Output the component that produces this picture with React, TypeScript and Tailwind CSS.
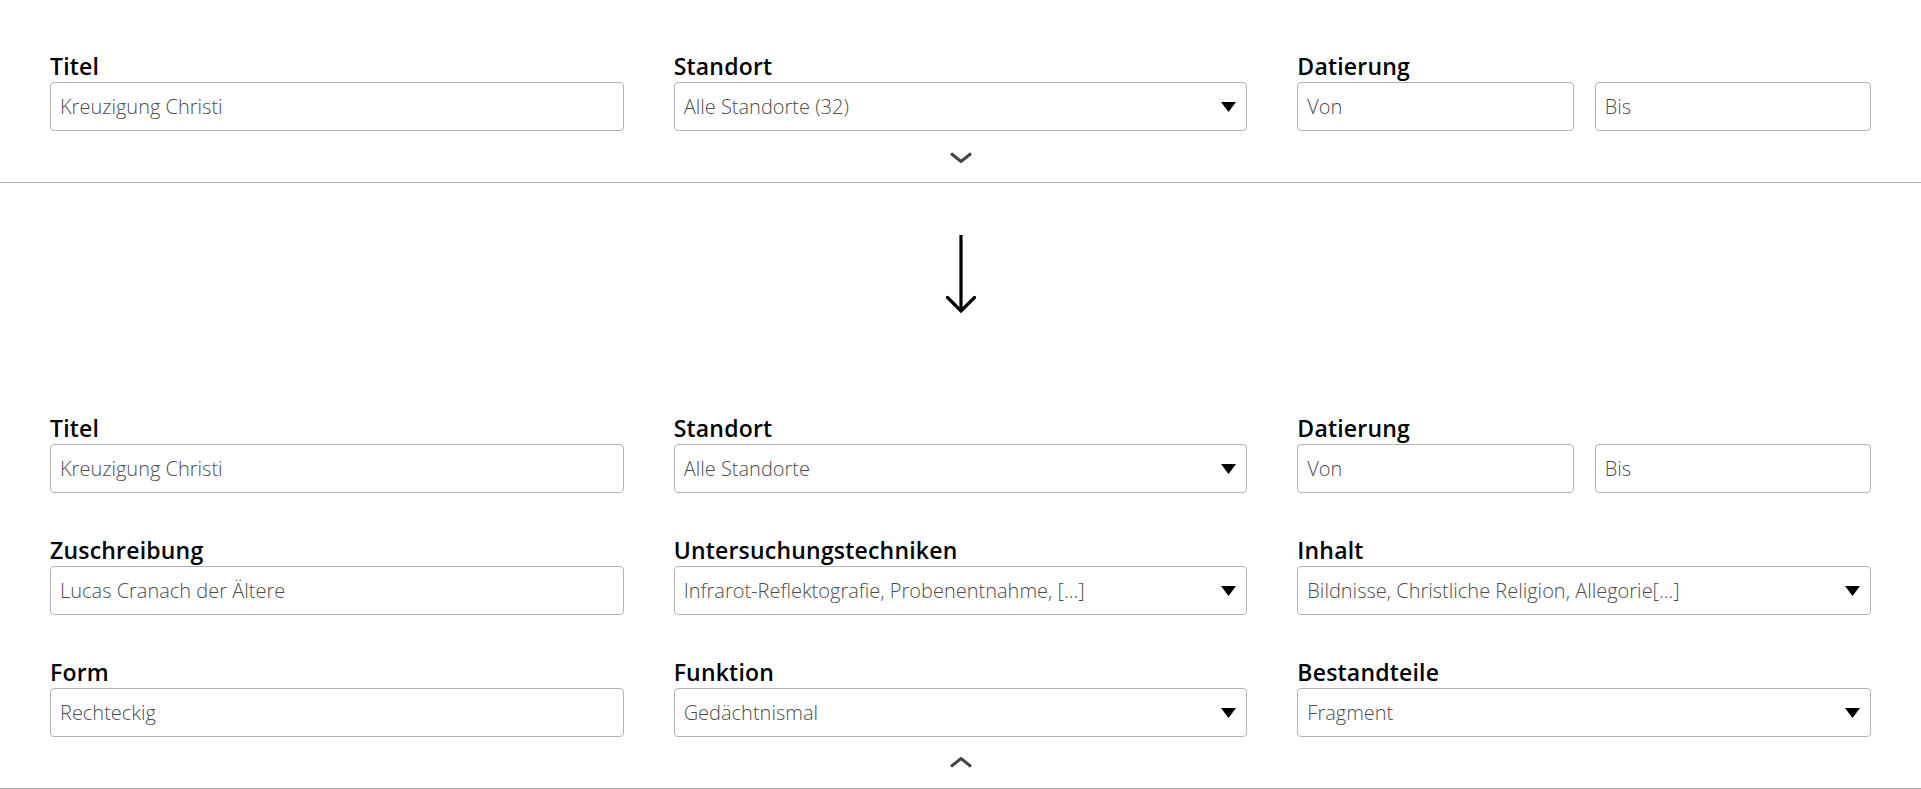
import React from "react"

const labelCls = "block font-['Open_Sans',sans-serif] font-semibold text-[23px] leading-[26px] tracking-[0.2px] text-black mb-[3px]"
const boxCls = "h-[49px] flex items-center border border-[#b3b3b3] rounded-[4px] bg-white pl-[9px] pr-[10px] font-['Open_Sans',sans-serif] font-light text-[20px] text-[#4d4d4d] whitespace-nowrap overflow-hidden"

function TextBox({ value }: { value: string }) {
  return <div className={boxCls}>{value}</div>
}

function SelectBox({ value }: { value: string }) {
  return (
    <div className={boxCls}>
      <span className="flex-1 truncate">{value}</span>
      <svg width="15" height="10" viewBox="0 0 15 10" className="shrink-0">
        <polygon points="0,0 15,0 7.5,10" fill="#000" />
      </svg>
    </div>
  )
}

function Field({ label, children }: { label: string; children: React.ReactNode }) {
  return (
    <div>
      <span className={labelCls}>{label}</span>
      {children}
    </div>
  )
}

function DateRange() {
  return (
    <Field label="Datierung">
      <div className="grid grid-cols-2 gap-[21px]">
        <TextBox value="Von" />
        <TextBox value="Bis" />
      </div>
    </Field>
  )
}

function Chevron({ up }: { up?: boolean }) {
  return (
    <div className="flex justify-center">
      <svg width="24" height="11" viewBox="0 0 24 11" className={up ? "rotate-180" : ""}>
        <polyline points="2,1.5 12,9.5 22,1.5" fill="none" stroke="#444" strokeWidth="3" strokeLinejoin="miter" />
      </svg>
    </div>
  )
}

export default function App() {
  return (
    <div className="w-[1921px] bg-white">
      {/* collapsed */}
      <section className="pt-[53px] pb-[19px] border-b border-[#b0b0b0]">
        <div className="grid grid-cols-3 gap-x-[50px] px-[50px]">
          <Field label="Titel">
            <TextBox value="Kreuzigung Christi" />
          </Field>
          <Field label="Standort">
            <SelectBox value="Alle Standorte (32)" />
          </Field>
          <DateRange />
        </div>
        <div className="mt-[21px]">
          <Chevron />
        </div>
      </section>

      <div className="flex justify-center pt-[52px] pb-[102px]">
        <svg width="30" height="78" viewBox="0 0 30 78">
          <line x1="15" y1="0" x2="15" y2="76" stroke="#000" strokeWidth="3.2" />
          <polyline points="1.5,62.5 15,76 28.5,62.5" fill="none" stroke="#000" strokeWidth="3.2" strokeLinecap="round" />
        </svg>
      </div>

      {/* expanded */}
      <section className="pb-[20px] border-b border-[#b0b0b0]">
        <div className="grid grid-cols-3 gap-x-[50px] gap-y-[44px] px-[50px]">
          <Field label="Titel">
            <TextBox value="Kreuzigung Christi" />
          </Field>
          <Field label="Standort">
            <SelectBox value="Alle Standorte" />
          </Field>
          <DateRange />

          <Field label="Zuschreibung">
            <TextBox value="Lucas Cranach der Ältere" />
          </Field>
          <Field label="Untersuchungstechniken">
            <SelectBox value="Infrarot-Reflektografie, Probenentnahme, [...]" />
          </Field>
          <Field label="Inhalt">
            <SelectBox value="Bildnisse, Christliche Religion, Allegorie[...]" />
          </Field>

          <Field label="Form">
            <TextBox value="Rechteckig" />
          </Field>
          <Field label="Funktion">
            <SelectBox value="Gedächtnismal" />
          </Field>
          <Field label="Bestandteile">
            <SelectBox value="Fragment" />
          </Field>
        </div>
        <div className="mt-[20px]">
          <Chevron up />
        </div>
      </section>
    </div>
  )
}
